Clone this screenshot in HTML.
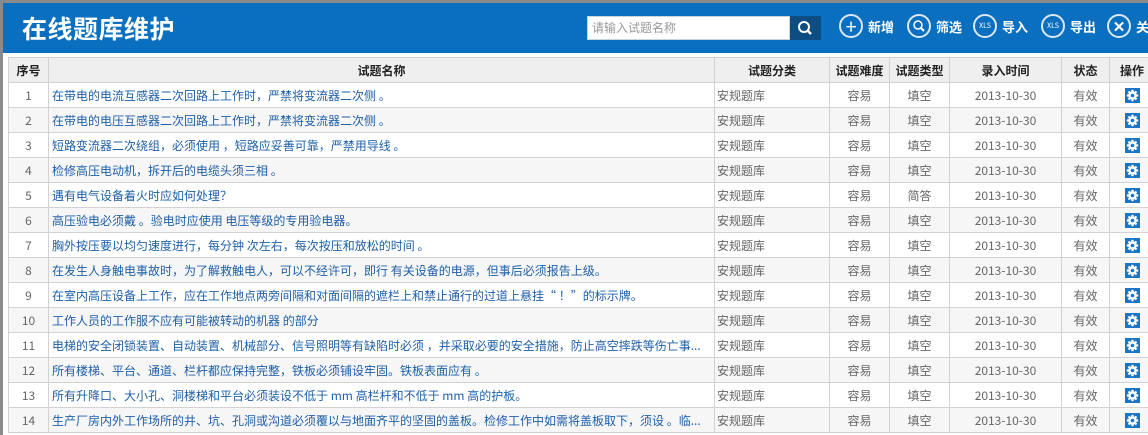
<!DOCTYPE html>
<html><head><meta charset="utf-8"><style>
*{margin:0;padding:0;box-sizing:border-box}
body{width:1148px;height:435px;overflow:hidden;background:#fff;font-family:"Liberation Sans","Microsoft YaHei","Noto Sans CJK SC",sans-serif;position:relative}
.frame{position:absolute;left:0;top:0;width:3px;height:435px;background:#8a8a8a}
.ftop{position:absolute;left:0;top:0;width:1148px;height:3px;background:#8a8a8a}
.hdr{position:absolute;left:3px;top:3px;width:1145px;height:50px;background:#0b6fbf}
.title{position:absolute;left:22px;top:10px;color:#fff;font-size:25px;font-weight:bold;font-family:"Noto Sans CJK SC",sans-serif;letter-spacing:0.5px}
.search{position:absolute;left:587px;top:16px;width:203px;height:24px;background:#fff;border:1px solid #c8d4e0;font-size:12px;color:#999;padding:3px 4px;font-family:"Noto Sans CJK SC",sans-serif;line-height:16px}
.sbtn{position:absolute;left:790px;top:16px;width:31px;height:24px;background:#0d4d82}
.btn{position:absolute;top:14px;color:#fff;font-size:13px;font-weight:bold;font-family:"Noto Sans CJK SC",sans-serif;display:flex;align-items:center}
.ic{width:24px;height:24px;border:2px solid #dbe8f5;border-radius:50%;margin-right:5px;display:flex;align-items:center;justify-content:center;color:#fff;font-size:7px;font-weight:normal}
table{position:absolute;left:8px;top:57px;border-collapse:collapse;font-size:12px;font-family:"Noto Sans CJK SC",sans-serif;table-layout:fixed;width:1146px}
td,th{border:1px solid #d2d2d2;height:25px;padding:0;white-space:nowrap;overflow:hidden}
th{background:#efefef;font-weight:bold;color:#222;height:25px;font-size:12px}
td{color:#666;text-align:center}
td.n{color:#1e5fa8;text-align:left;padding-left:3px}
td.c{text-align:left;padding-left:2px}
#b tr:nth-child(even) td{background:#f6f6f6}
.g{display:inline-block;width:15px;height:15px;background:#1a75c4;vertical-align:middle;position:relative;top:-1px}
.g svg{position:absolute;left:1px;top:1px}
</style></head><body>
<div class="ftop"></div><div class="frame"></div>
<div class="hdr"></div>
<div class="title">在线题库维护</div>
<div class="search">请输入试题名称</div>
<div class="sbtn"><svg width="31" height="24"><circle cx="14" cy="11" r="5" stroke="#fff" stroke-width="2" fill="none"/><line x1="17.5" y1="14.5" x2="21" y2="18" stroke="#fff" stroke-width="2.5"/></svg></div>
<div class="btn" style="left:839px"><div class="ic" style="font-size:20px;font-weight:normal;line-height:20px">+</div>新增</div>
<div class="btn" style="left:907px"><div class="ic"><svg width="14" height="14"><circle cx="6" cy="6" r="4" stroke="#fff" stroke-width="1.5" fill="none"/><line x1="9" y1="9" x2="12" y2="12" stroke="#fff" stroke-width="2"/></svg></div>筛选</div>
<div class="btn" style="left:973px"><div class="ic">XLS</div>导入</div>
<div class="btn" style="left:1041px"><div class="ic">XLS</div>导出</div>
<div class="btn" style="left:1107px"><div class="ic" style="font-size:15px;font-weight:bold">✕</div>关</div>
<table>
<colgroup><col style="width:40px"><col style="width:666px"><col style="width:115px"><col style="width:60px"><col style="width:60px"><col style="width:112px"><col style="width:48px"><col style="width:45px"></colgroup>
<thead><tr><th>序号</th><th>试题名称</th><th>试题分类</th><th>试题难度</th><th>试题类型</th><th>录入时间</th><th>状态</th><th>操作</th></tr></thead>
<tbody id="b"></tbody>
</table>
<script>
var q=["在带电的电流互感器二次回路上工作时，严禁将变流器二次侧 。","在带电的电压互感器二次回路上工作时，严禁将变流器二次侧 。","短路变流器二次绕组，必须使用 ，短路应妥善可靠，严禁用导线 。","检修高压电动机，拆开后的电缆头须三相 。","遇有电气设备着火时应如何处理？","高压验电必须戴 。验电时应使用 电压等级的专用验电器。","胸外按压要以均匀速度进行，每分钟 次左右，每次按压和放松的时间 。","在发生人身触电事故时，为了解救触电人，可以不经许可，即行 有关设备的电源，但事后必须报告上级。","在室内高压设备上工作，应在工作地点两旁间隔和对面间隔的遮栏上和禁止通行的过道上悬挂“ ！”的标示牌。","工作人员的工作服不应有可能被转动的机器 的部分","电梯的安全闭锁装置、自动装置、机械部分、信号照明等有缺陷时必须 ，并采取必要的安全措施，防止高空摔跌等伤亡事...","所有楼梯、平台、通道、栏杆都应保持完整，铁板必须铺设牢固。铁板表面应有 。","所有升降口、大小孔、洞楼梯和平台必须装设不低于 mm 高栏杆和不低于 mm 高的护板。","生产厂房内外工作场所的井、坑、孔洞或沟道必须覆以与地面齐平的坚固的盖板。检修工作中如需将盖板取下，须设 。临..."];
var g='<span class="g"><svg width="13" height="13" viewBox="0 0 13 13"><circle cx="6.5" cy="6.5" r="4.2" fill="#fff"/><g stroke="#fff" stroke-width="2.2"><line x1="6.5" y1="0.8" x2="6.5" y2="12.2"/><line x1="0.8" y1="6.5" x2="12.2" y2="6.5"/><line x1="2.5" y1="2.5" x2="10.5" y2="10.5"/><line x1="10.5" y1="2.5" x2="2.5" y2="10.5"/></g><circle cx="6.5" cy="6.5" r="1.8" fill="#1a75c4"/></svg></span>';
var h='';for(var i=0;i<14;i++){h+='<tr><td>'+(i+1)+'</td><td class="n">'+q[i]+'</td><td class="c">安规题库</td><td>容易</td><td>'+(i==4?'简答':'填空')+'</td><td>2013-10-30</td><td>有效</td><td>'+g+'</td></tr>';}
document.getElementById('b').innerHTML=h;
</script>
</body></html>
